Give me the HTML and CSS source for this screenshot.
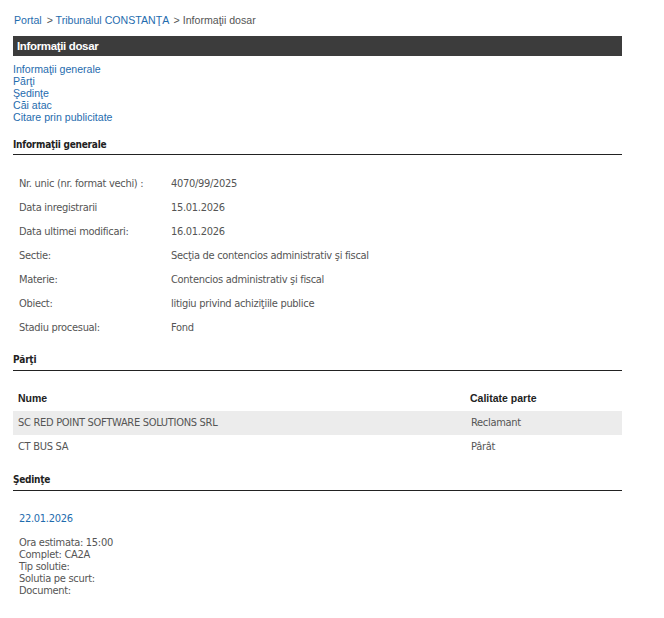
FILE: index.html
```html
<!DOCTYPE html>
<html lang="ro">
<head>
<meta charset="utf-8">
<title>Informaţii dosar</title>
<link rel="stylesheet" href="styles.css">
</head>
<body>
<div class="page">
  <div class="crumbs">
    <a href="#" class="crumb-link">Portal</a>
    <span class="sep">&gt;</span>
    <a href="#" class="crumb-link">Tribunalul CONSTANŢA</a>
    <span class="sep">&gt;</span>
    <span class="crumb-current">Informaţii dosar</span>
  </div>

  <div class="titlebar">Informaţii dosar</div>

  <nav class="toc">
    <a href="#gen">Informaţii generale</a>
    <a href="#parti">Părţi</a>
    <a href="#sedinte">Şedinţe</a>
    <a href="#cai">Căi atac</a>
    <a href="#citare">Citare prin publicitate</a>
  </nav>

  <h2 class="section-title first" id="gen">Informaţii generale</h2>
  <div class="info">
    <div class="info-row"><span class="info-label">Nr. unic (nr. format vechi) :</span><span class="info-value">4070/99/2025</span></div>
    <div class="info-row"><span class="info-label">Data inregistrarii</span><span class="info-value">15.01.2026</span></div>
    <div class="info-row"><span class="info-label">Data ultimei modificari:</span><span class="info-value">16.01.2026</span></div>
    <div class="info-row"><span class="info-label">Sectie:</span><span class="info-value">Secţia de contencios administrativ şi fiscal</span></div>
    <div class="info-row"><span class="info-label">Materie:</span><span class="info-value">Contencios administrativ şi fiscal</span></div>
    <div class="info-row"><span class="info-label">Obiect:</span><span class="info-value">litigiu privind achiziţiile publice</span></div>
    <div class="info-row"><span class="info-label">Stadiu procesual:</span><span class="info-value">Fond</span></div>
  </div>

  <h2 class="section-title" id="parti">Părţi</h2>
  <div class="parties">
    <div class="party-row party-head"><span class="party-name">Nume</span><span class="party-role">Calitate parte</span></div>
    <div class="party-row shaded"><span class="party-name">SC RED POINT SOFTWARE SOLUTIONS SRL</span><span class="party-role">Reclamant</span></div>
    <div class="party-row"><span class="party-name">CT BUS SA</span><span class="party-role">Pârât</span></div>
  </div>

  <h2 class="section-title second" id="sedinte">Şedinţe</h2>
  <div class="hearing">
    <div class="hearing-date">22.01.2026</div>
    <div class="hearing-lines">
      <div>Ora estimata: 15:00</div>
      <div>Complet: CA2A</div>
      <div>Tip solutie:</div>
      <div>Solutia pe scurt:</div>
      <div>Document:</div>
    </div>
  </div>
</div>
</body>
</html>
```

FILE: styles.css
```css
html, body {
  margin: 0;
  padding: 0;
  background: #ffffff;
}

.page {
  width: 609px;
  margin-left: 13px;
  padding-top: 14px;
  font-family: "Liberation Sans", Arial, sans-serif;
}

.crumbs {
  font-size: 10.6px;
  line-height: 13px;
  color: #555555;
  padding-left: 1px;
}

.crumb-link {
  color: #1f6cae;
  text-decoration: none;
}

.sep {
  color: #555555;
  margin-left: 2px;
}

.crumb-current {
  color: #555555;
}

.titlebar {
  margin-top: 9px;
  height: 20px;
  line-height: 20px;
  background: #3c3c3c;
  color: #ffffff;
  font-weight: bold;
  font-size: 11.5px;
  letter-spacing: -0.35px;
  padding-left: 4px;
}

.toc {
  margin-top: 7px;
  display: flex;
  flex-direction: column;
  font-size: 10.6px;
  line-height: 12px;
}

.toc a {
  color: #1f6cae;
  text-decoration: none;
}

.section-title {
  margin: 13px 0 0 0;
  font-family: "DejaVu Sans Condensed", "DejaVu Sans", sans-serif;
  font-size: 10px;
  font-weight: bold;
  letter-spacing: -0.25px;
  line-height: 14px;
  color: #222222;
  padding-bottom: 3px;
  border-bottom: 1px solid #222222;
}

.section-title.first {
  margin-top: 15px;
  padding-bottom: 2px;
}

.section-title.second {
  margin-top: 14px;
}

.info {
  margin-top: 17px;
  font-family: "DejaVu Sans Condensed", "DejaVu Sans", sans-serif;
  font-size: 11px;
  letter-spacing: -0.3px;
  color: #555555;
}

.info-row {
  display: grid;
  grid-template-columns: 152px 1fr;
  height: 24px;
  line-height: 24px;
  padding-left: 6px;
}

.parties {
  margin-top: 15px;
  font-family: "DejaVu Sans Condensed", "DejaVu Sans", sans-serif;
  font-size: 11px;
  letter-spacing: -0.3px;
  color: #555555;
}

.party-row {
  display: grid;
  grid-template-columns: 452px 1fr;
  height: 24px;
  line-height: 24px;
  padding-left: 5px;
}

.party-row .party-role {
  padding-left: 1px;
}

.party-head {
  height: 25px;
  font-family: "Liberation Sans", Arial, sans-serif;
  font-weight: bold;
  font-size: 10.5px;
  letter-spacing: 0;
  color: #222222;
}

.party-head .party-role {
  padding-left: 0;
}

.shaded {
  background: #ececec;
}

.hearing {
  padding-left: 6px;
  font-family: "DejaVu Sans Condensed", "DejaVu Sans", sans-serif;
  font-size: 11px;
  letter-spacing: -0.3px;
  color: #555555;
}

.hearing-date {
  margin-top: 16px;
  color: #1f6cae;
  line-height: 24px;
}

.hearing-lines {
  margin-top: 6px;
  line-height: 12px;
}
```
